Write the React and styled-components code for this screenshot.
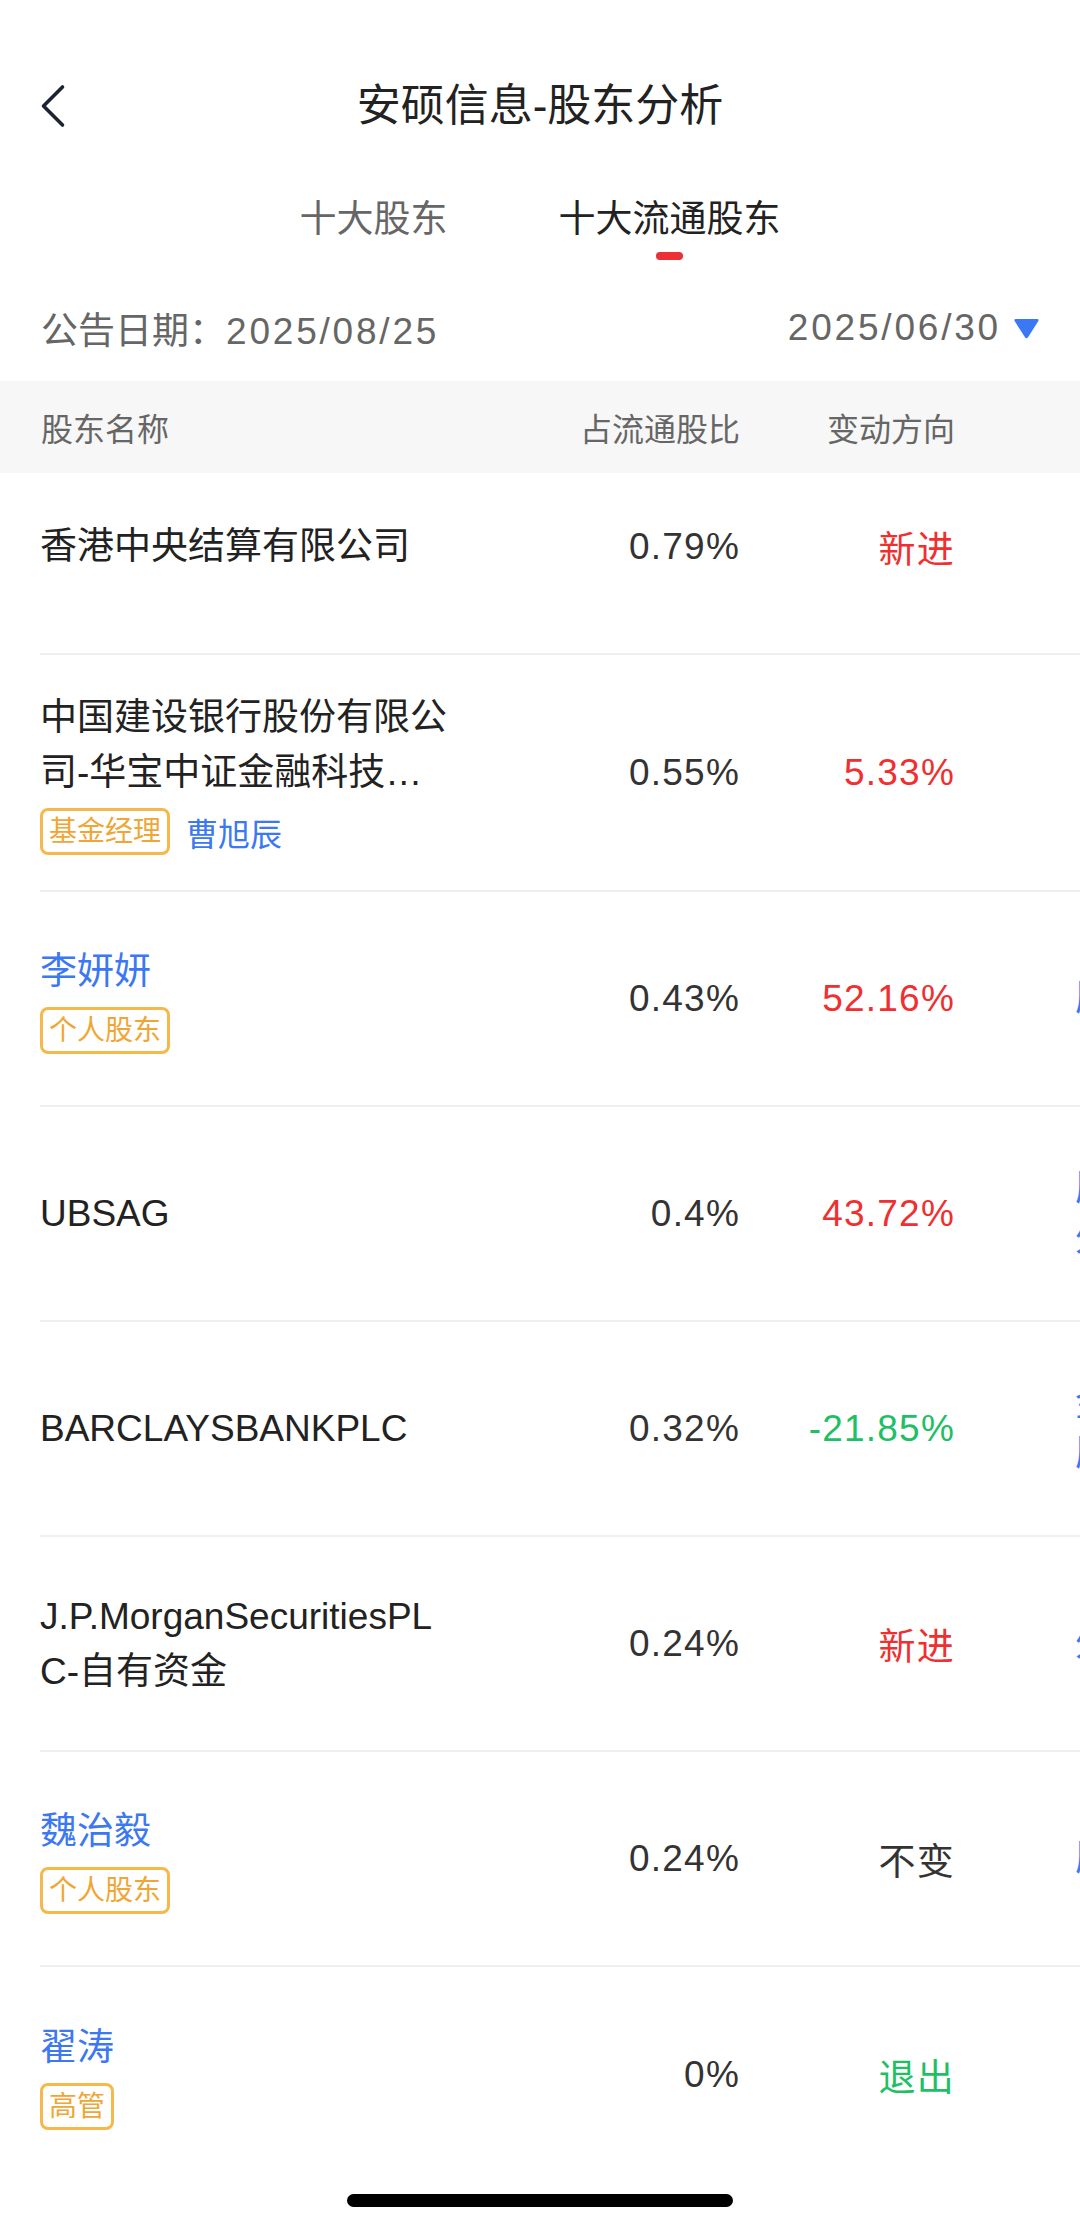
import React from 'react';
import styled, { createGlobalStyle } from 'styled-components';

const FONT = `"Liberation Sans", "Noto Sans CJK SC", "Noto Sans", sans-serif`;

const GlobalStyle = createGlobalStyle`
  html, body { margin: 0; padding: 0; background: #fff; }
  body { font-family: ${FONT}; -webkit-font-smoothing: antialiased; }
  * { box-sizing: border-box; }
`;

const Page = styled.div`
  width: 1080px;
  height: 2229px;
  overflow: hidden;
  background: #fff;
  font-family: ${FONT};
  color: #222;
  display: flex;
  flex-direction: column;
`;

const NavBar = styled.header`
  margin-top: 40px;
  height: 132px;
  display: grid;
  grid-template-columns: 1fr auto 1fr;
  align-items: center;
`;

const BackButton = styled.button`
  justify-self: start;
  margin-left: 40px;
  padding: 0;
  border: 0;
  background: none;
  display: flex;
  align-items: center;
`;

const Title = styled.h1`
  margin: 0;
  font-size: 44px;
  line-height: 60px;
  font-weight: 400;
  color: #222;
`;

const Tabs = styled.nav`
  display: flex;
  justify-content: center;
  gap: 111px;
  padding: 20px 0 22px;
`;

const Tab = styled.div`
  display: flex;
  flex-direction: column;
  align-items: center;
  font-size: 37px;
  line-height: 55px;
  color: ${(p) => (p.$active ? '#222' : '#666')};
`;

const Indicator = styled.span`
  margin-top: 5px;
  width: 27px;
  height: 8px;
  border-radius: 4px;
  background: ${(p) => (p.$show ? '#ec2f35' : 'transparent')};
`;

const DateRow = styled.div`
  height: 99px;
  padding: 0 40px 8px 41px;
  display: flex;
  align-items: center;
  justify-content: space-between;
  font-size: 37px;
  color: #666;
`;

const DateValue = styled.span`
  letter-spacing: 2.8px;
`;

const Period = styled.div`
  display: flex;
  align-items: center;
  gap: 12px;
`;

const Table = styled.section`
  display: flex;
  flex-direction: column;
`;

const HeaderRow = styled.div`
  height: 92px;
  background: #f7f7f7;
  padding-left: 41px;
  display: flex;
  align-items: center;
  font-size: 32px;
  color: #666;
`;

const Row = styled.div`
  margin-left: 40px;
  display: flex;
  align-items: center;
  min-height: ${(p) => (p.$peek ? 182 : 215)}px;
  padding: ${(p) => (p.$peek ? '0 0 33px' : '35px 0')};
  border-bottom: 2px solid #efefef;
  &:last-child {
    border-bottom: 0;
  }
`;

const NameCol = styled.div`
  flex: none;
  width: ${(p) => (p.$head ? 421 : 410)}px;
  margin-right: ${(p) => (p.$head ? 0 : 12)}px;
  display: flex;
  flex-direction: column;
  align-items: flex-start;
`;

const Name = styled.div`
  font-size: 37px;
  line-height: 55px;
  color: ${(p) => (p.$link ? '#3b78f2' : '#222')};
  word-break: break-all;
  display: -webkit-box;
  -webkit-box-orient: vertical;
  -webkit-line-clamp: 2;
  overflow: hidden;
`;

const TagLine = styled.div`
  margin-top: 8px;
  display: flex;
  align-items: center;
  gap: 16px;
`;

const Tag = styled.span`
  font-size: 28px;
  line-height: 41px;
  padding: 0 6px;
  border: 3px solid #f5b84a;
  border-radius: 8px;
  color: #f0a634;
`;

const Manager = styled.span`
  font-size: 32px;
  color: #3b78f2;
`;

const ValueCol = styled.div`
  flex: none;
  width: 278px;
  text-align: right;
  font-size: ${(p) => (p.$head ? 32 : 37)}px;
  letter-spacing: ${(p) => (p.$head ? 0 : 1.2)}px;
  color: ${(p) => (p.$head ? '#666' : '#333')};
`;

const TONES = { up: '#ef2f30', down: '#1fbf66', flat: '#333' };

const ChangeCol = styled.div`
  flex: none;
  width: 215px;
  text-align: right;
  font-size: ${(p) => (p.$head ? 32 : 37)}px;
  letter-spacing: ${(p) => (p.$head ? 0 : 1.2)}px;
  color: ${(p) => (p.$head ? '#666' : TONES[p.$tone] || '#333')};
`;

const ExtraCol = styled.div`
  flex: none;
  width: 340px;
  padding-left: 120px;
  font-size: 37px;
  line-height: 50px;
  color: #3b78f2;
  white-space: nowrap;
`;

const ExtraLine = styled.div``;

const HomeIndicator = styled.div`
  margin: 12px auto 0;
  width: 386px;
  height: 13px;
  border-radius: 7px;
  background: #000;
`;

const rows = [
  { name: '香港中央结算有限公司', ratio: '0.79%', change: '新进', tone: 'up' },
  {
    name: '中国建设银行股份有限公司-华宝中证金融科技主题交易型开放式指数证券投资基金',
    ratio: '0.55%',
    change: '5.33%',
    tone: 'up',
    tag: '基金经理',
    manager: '曹旭辰',
  },
  { name: '李妍妍', link: true, tag: '个人股东', ratio: '0.43%', change: '52.16%', tone: 'up', extra: ['历史持股'] },
  { name: 'UBSAG', ratio: '0.4%', change: '43.72%', tone: 'up', extra: ['历史', '外资'] },
  { name: 'BARCLAYSBANKPLC', ratio: '0.32%', change: '-21.85%', tone: 'down', extra: ['金融', '历史'] },
  { name: 'J.P.MorganSecuritiesPLC-自有资金', ratio: '0.24%', change: '新进', tone: 'up', extra: ['外资'] },
  { name: '魏治毅', link: true, tag: '个人股东', ratio: '0.24%', change: '不变', tone: 'flat', extra: ['历史'] },
  { name: '翟涛', link: true, tag: '高管', ratio: '0%', change: '退出', tone: 'down' },
];

function Chevron() {
  return (
    <svg width="26" height="44" viewBox="0 0 26 44" fill="none">
      <path d="M22.5 3 L3.5 22 L22.5 41" stroke="#1c2432" strokeWidth="3.6" strokeLinecap="round" strokeLinejoin="round" />
    </svg>
  );
}

function Caret() {
  return (
    <svg width="27" height="22" viewBox="0 0 27 22">
      <path d="M3 2 H24 Q26.5 2 25.2 4.3 L15.2 20 Q13.5 22.4 11.8 20 L1.8 4.3 Q0.5 2 3 2 Z" fill="#3a78f5" />
    </svg>
  );
}

export default function App() {
  return (
    <Page>
      <GlobalStyle />
      <NavBar>
        <BackButton aria-label="返回">
          <Chevron />
        </BackButton>
        <Title>安硕信息-股东分析</Title>
        <span />
      </NavBar>
      <Tabs>
        <Tab>
          十大股东
          <Indicator />
        </Tab>
        <Tab $active>
          十大流通股东
          <Indicator $show />
        </Tab>
      </Tabs>
      <DateRow>
        <span>
          公告日期：<DateValue>2025/08/25</DateValue>
        </span>
        <Period>
          <DateValue>2025/06/30</DateValue>
          <Caret />
        </Period>
      </DateRow>
      <Table>
        <HeaderRow>
          <NameCol $head>股东名称</NameCol>
          <ValueCol $head>占流通股比</ValueCol>
          <ChangeCol $head>变动方向</ChangeCol>
        </HeaderRow>
        {rows.map((r, i) => (
          <Row key={i} $peek={i === 0}>
            <NameCol>
              <Name $link={r.link}>{r.name}</Name>
              {r.tag && (
                <TagLine>
                  <Tag>{r.tag}</Tag>
                  {r.manager && <Manager>{r.manager}</Manager>}
                </TagLine>
              )}
            </NameCol>
            <ValueCol>{r.ratio}</ValueCol>
            <ChangeCol $tone={r.tone}>{r.change}</ChangeCol>
            <ExtraCol>
              {(r.extra || []).map((t, j) => (
                <ExtraLine key={j}>{t}</ExtraLine>
              ))}
            </ExtraCol>
          </Row>
        ))}
      </Table>
      <HomeIndicator />
    </Page>
  );
}
